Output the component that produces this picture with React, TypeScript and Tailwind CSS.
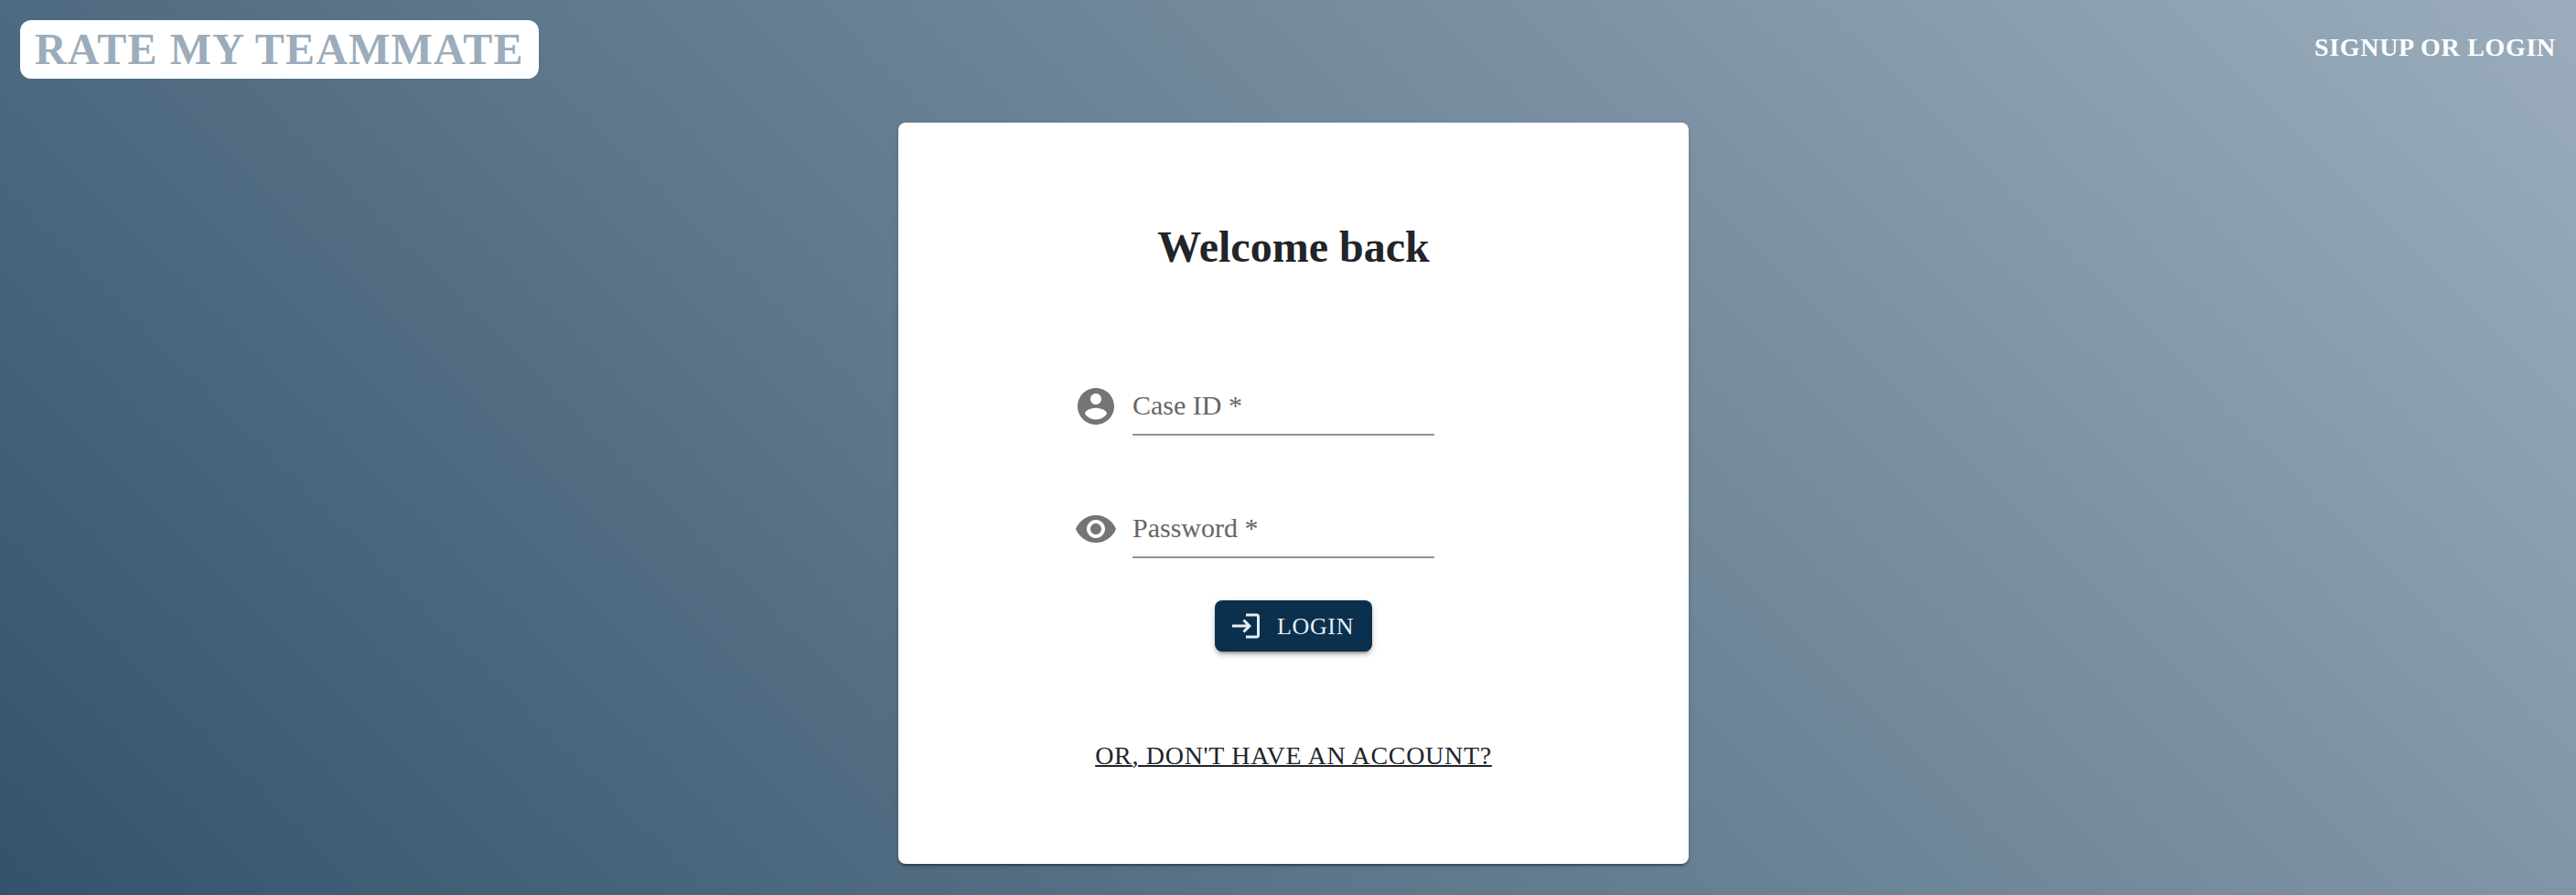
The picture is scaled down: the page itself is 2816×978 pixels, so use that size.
import { useState } from "react";
import type { FormEvent, ReactNode } from "react";

type IconProps = { path: string; className: string };

function Icon({ path, className }: IconProps) {
  return (
    <svg viewBox="0 0 24 24" fill="currentColor" aria-hidden="true" className={className}>
      <path d={path} />
    </svg>
  );
}

const ACCOUNT =
  "M12 2C6.48 2 2 6.48 2 12s4.48 10 10 10 10-4.48 10-10S17.52 2 12 2zm0 3c1.66 0 3 1.34 3 3s-1.34 3-3 3-3-1.34-3-3 1.34-3 3-3zm0 14.2c-2.5 0-4.71-1.28-6-3.22.03-1.99 4-3.08 6-3.08 1.99 0 5.97 1.09 6 3.08-1.29 1.94-3.5 3.22-6 3.22z";
const EYE =
  "M12 4.5C7 4.5 2.73 7.61 1 12c1.73 4.39 6 7.5 11 7.5s9.27-3.11 11-7.5c-1.73-4.39-6-7.5-11-7.5zM12 17c-2.76 0-5-2.24-5-5s2.24-5 5-5 5 2.24 5 5-2.24 5-5 5zm0-8c-1.66 0-3 1.34-3 3s1.34 3 3 3 3-1.34 3-3-1.34-3-3-3z";
const EYE_OFF =
  "M12 7c2.76 0 5 2.24 5 5 0 .65-.13 1.26-.36 1.83l2.92 2.92c1.51-1.26 2.7-2.89 3.43-4.75-1.73-4.39-6-7.5-11-7.5-1.4 0-2.74.25-3.98.7l2.16 2.16C10.74 7.13 11.35 7 12 7zM2 4.27l2.28 2.28.46.46C3.08 8.3 1.78 10.02 1 12c1.73 4.39 6 7.5 11 7.5 1.55 0 3.03-.3 4.38-.84l.42.42L19.73 22 21 20.73 3.27 3 2 4.27z";
const LOGIN =
  "M11 7 9.6 8.4l2.6 2.6H2v2h10.2l-2.6 2.6L11 17l5-5-5-5zm9 12h-8v2h8c1.1 0 2-.9 2-2V5c0-1.1-.9-2-2-2h-8v2h8v14z";

type FieldProps = { id: string; label: string; type: string; icon: ReactNode };

function Field({ id, label, type, icon }: FieldProps) {
  return (
    <div className="flex items-start gap-4 text-[#757575]">
      {icon}
      <div className="relative w-[330px]">
        <input
          id={id}
          name={id}
          type={type}
          placeholder=" "
          className="peer block h-14 w-full border-b-2 border-[#949494] bg-transparent text-[30px] text-[#212529] outline-none focus:border-[#0b304d]"
        />
        <label
          htmlFor={id}
          className="pointer-events-none absolute top-0 left-0 text-[30px] leading-[46px] text-[#666666] peer-focus:-top-8 peer-focus:text-2xl peer-[:not(:placeholder-shown)]:-top-8 peer-[:not(:placeholder-shown)]:text-2xl"
        >
          {label} *
        </label>
      </div>
    </div>
  );
}

export default function App() {
  const [visible, setVisible] = useState(false);
  const submit = (event: FormEvent) => event.preventDefault();

  return (
    <div className="flex min-h-screen flex-col bg-[linear-gradient(45deg,#34536b,#9badbc)] font-['Liberation_Serif',serif] text-[#212529]">
      <header className="flex items-start justify-between p-[22px]">
        <a
          href="#home"
          className="rounded-xl bg-white px-4 text-5xl leading-[64px] font-bold tracking-wide text-[#9badbc]"
        >
          RATE MY TEAMMATE
        </a>
        <a href="#signup" className="text-[28px] leading-[60px] font-bold tracking-wide text-white">
          SIGNUP OR LOGIN
        </a>
      </header>

      <main className="flex justify-center pt-[26px] pb-8 pl-3">
        <section className="w-full max-w-[864px] rounded-lg bg-white pt-[108px] pb-[98px] shadow-[0_4px_2px_-2px_rgba(0,0,0,0.2),0_2px_2px_rgba(0,0,0,0.14),0_2px_6px_rgba(0,0,0,0.12)]">
          <h1 className="text-center text-5xl leading-[56px] font-bold">Welcome back</h1>
          <form onSubmit={submit} className="mx-auto mt-[122px] flex max-w-[480px] flex-col">
            <div className="flex flex-col gap-[78px]">
              <Field
                id="case-id"
                label="Case ID"
                type="text"
                icon={<Icon path={ACCOUNT} className="size-12 shrink-0" />}
              />
              <Field
                id="password"
                label="Password"
                type={visible ? "text" : "password"}
                icon={
                  <button
                    type="button"
                    aria-label="Toggle password visibility"
                    onClick={() => setVisible(!visible)}
                    className="shrink-0 cursor-pointer"
                  >
                    <Icon path={visible ? EYE_OFF : EYE} className="size-12" />
                  </button>
                }
              />
            </div>
            <button
              type="submit"
              className="mt-[46px] flex h-14 cursor-pointer items-center gap-4 self-center rounded-lg bg-[#0b304d] pr-5 pl-4 text-[26px] tracking-wide text-[#e6eef5] shadow-[0_6px_2px_-4px_rgba(0,0,0,0.2),0_4px_4px_rgba(0,0,0,0.14),0_2px_10px_rgba(0,0,0,0.12)]"
            >
              <Icon path={LOGIN} className="size-9" />
              LOGIN
            </button>
            <a
              href="#register"
              className="mt-[94px] self-center text-[28px] leading-10 tracking-wide underline decoration-2"
            >
              OR, DON'T HAVE AN ACCOUNT?
            </a>
          </form>
        </section>
      </main>
    </div>
  );
}
